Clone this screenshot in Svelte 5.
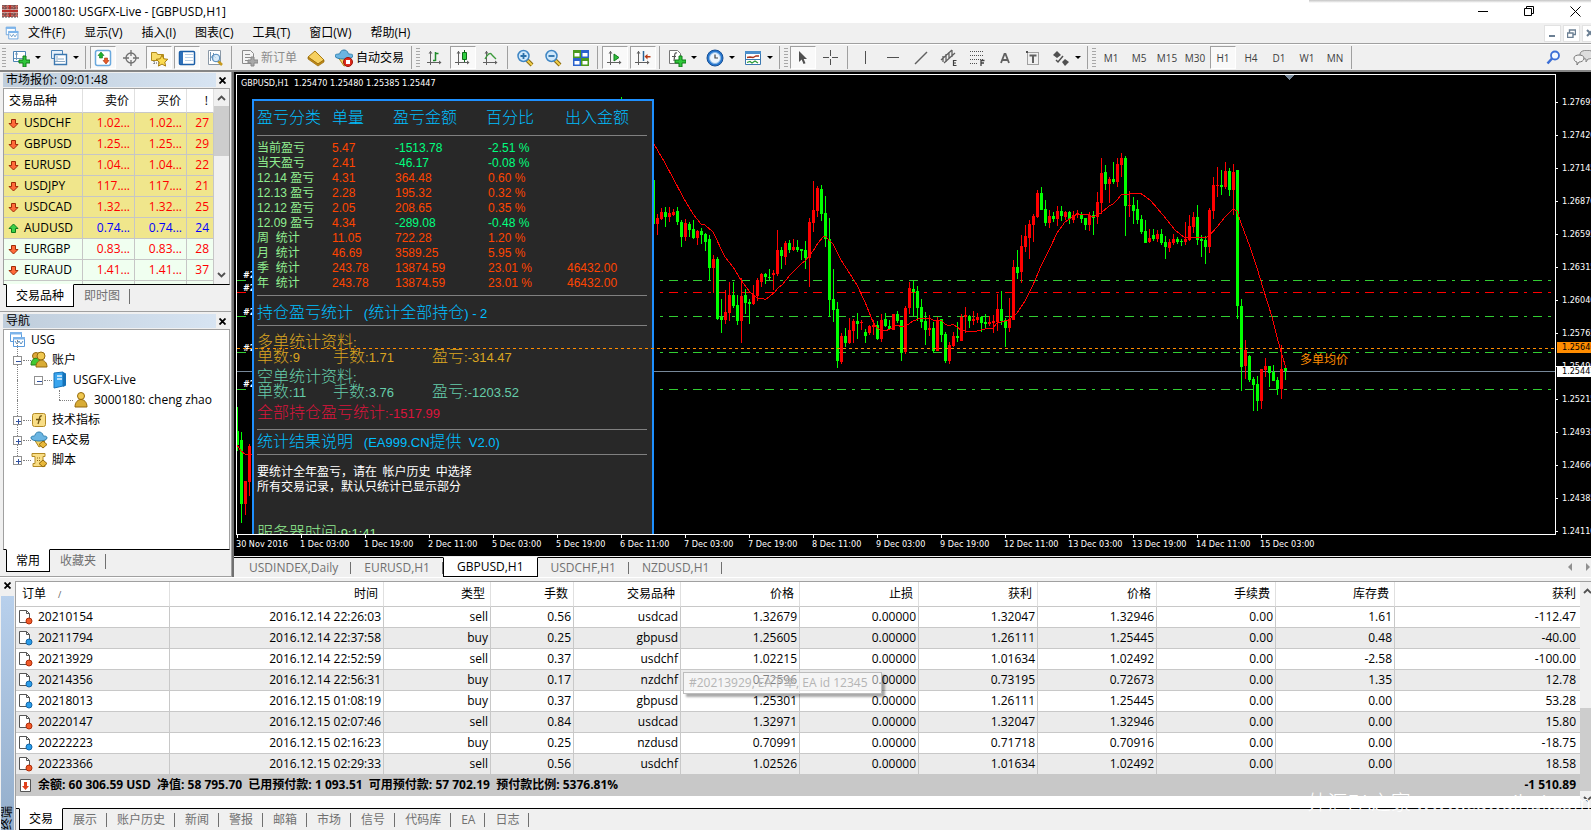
<script>
  const menus = ['文件(F)', '显示(V)', '插入(I)', '图表(C)', '工具(T)', '窗口(W)', '帮助(H)'];

  const axes = '<path d="M4.5 2v14M1 13.5h14" stroke="#606060" fill="none"/><path d="M2.5 4.5l2-2.5 2 2.500zM13 11.500l2.500 2-2.500 2z" fill="#606060"/>';
  const plus = '<path d="M11 7h3v4h4v3h-4v4h-3v-4H7v-3h4z" fill="#2fc63a" stroke="#107a18"/>';
  const lens = '<path d="M11 11l5 5" stroke="#8a6a10" stroke-width="4"/><path d="M11 11l5 5" stroke="#f2cf4a" stroke-width="2"/><circle cx="7.500" cy="7" r="5.500" fill="#cfe8fb" stroke="#3f86c4" stroke-width="1.500"/>';
  const icons = {
    newchart: '<path d="M1.500 2.500h12v10h-12z" fill="#fff" stroke="#4b83b5"/><path d="M4.500 3v8M2 9.500h10M3 5h3" stroke="#6c97bd" fill="none"/>' + plus,
    profiles: '<path d="M1.500 1.500h11v8h-11z" fill="#e6f1fb" stroke="#4b83b5"/><path d="M4.500 5.500h12v10h-12z" fill="#fff" stroke="#3c78b0" stroke-width="1.400"/><path d="M7 7v6M5 12.500h10M8 10h6" stroke="#8aa9c4" fill="none"/>',
    market: '<rect x="1.500" y="1.500" width="15" height="15" rx="2" fill="#fff" stroke="#6aa9de" stroke-width="1.500"/><path d="M7 3l3 3.500H8.500V9h-3V6.500H4z" fill="#20b030" stroke="#0f7a1c" stroke-width=".6"/><path d="M12 15l-3-3.500h1.500V9h3v2.500H15z" fill="#e85a28" stroke="#a8330c" stroke-width=".6"/>',
    target: '<circle cx="9" cy="9" r="5" fill="none" stroke="#707070" stroke-width="1.300"/><path d="M9 1v6M9 11v6M1 9h6M11 9h6" stroke="#707070" stroke-width="1.300"/>',
    navigator: '<path d="M1.500 3.500h5l1 2h6v6h-12z" fill="#f8dc6a" stroke="#b08a1c"/><path d="M4 12v4M4 14h5" stroke="#555" stroke-dasharray="1 1"/><path d="M12 6l1.800 3.800 4 .5-3 2.800.8 4-3.600-2-3.600 2 .8-4-3-2.800 4-.5z" fill="#fbdc50" stroke="#a87c10"/>',
    terminal: '<rect x="1.500" y="2.500" width="15" height="13" rx="1" fill="#fff" stroke="#1c5fa8" stroke-width="1.500"/><path d="M2 3h3v12H2z" fill="#2d6fb8"/><path d="M7 5.500h8M7 8.500h8M7 11.500h8" stroke="#b9cfe6"/>',
    tester: '<path d="M2.500 1.500h12v14h-12z" fill="#fff" stroke="#8a98a6"/><path d="M4.500 3v9M7.500 4v8M4 10l3-4 3 3" stroke="#6f93b5" fill="none"/><path d="M12 12l4 4" stroke="#c79a1e" stroke-width="2.500"/><circle cx="10" cy="9" r="3.800" fill="#cfe6f8cc" stroke="#4c86ba"/>',
    order: '<path d="M2.500 1.500h8l3 3v10h-11z" fill="#f4f4f4" stroke="#8c8c8c"/><path d="M5 5.500h5M5 8.500h6M5 11.500h4" stroke="#8c8c8c"/><path d="M11 8h3v3h4v3h-4v3h-3v-3H8v-3h3z" fill="#a8a8a8" stroke="#888"/>',
    gold: '<path d="M1 8l7-6 9 9-6 4z" fill="#f6d060" stroke="#a87a10"/><path d="M1 8l10 7 6-4v2l-6 4L1 10z" fill="#c58c16" stroke="#94690c" stroke-width=".7"/>',
    ea: '<path d="M3 8l6 9 5-2 2-7z" fill="#f5d263" stroke="#ad8418"/><path d="M0 7c0-3 5-1 5-3 1-4 7-4 8 0 0 2 5 0 5 3 0 4-18 4-18 0z" fill="#6bb5e2" stroke="#2e7fae"/><circle cx="13" cy="13" r="4.500" fill="#de2a1c" stroke="#9c1208"/><path d="M11 11h4v4h-4z" fill="#fff"/>',
    bars: axes + '<path d="M9.500 3v9M9.500 4.500h3M7 11.500h2.500" stroke="#1f8a2a" stroke-width="1.500" fill="none"/>',
    candles: axes + '<path d="M10.500 1v12" stroke="#0f6a1a"/><path d="M8.500 3.500h4v7h-4z" fill="#30d040" stroke="#0f6a1a"/>',
    line: axes + '<path d="M3 10C7 3 9 4 10 6l4 4" stroke="#3a9a3a" stroke-width="1.300" fill="none"/>',
    zoomin: lens + '<path d="M7.500 4v6M4.500 7h6" stroke="#2a6fa8" stroke-width="1.800"/>',
    zoomout: lens + '<path d="M4.500 7h6" stroke="#2a6fa8" stroke-width="1.800"/>',
    tile: '<path d="M1 1h8v8H1zM9 9h8v8H9z" fill="#4a9a1e"/><path d="M9 1h8v8H9zM1 9h8v8H1z" fill="#2a62cc"/><path d="M2.500 4h5v3.500h-5zM10.500 4h5v3.500h-5zM2.500 12h5v3.500h-5zM10.500 12h5v3.500h-5z" fill="#fff"/>',
    scroll: axes + '<path d="M8 5l5 3.500L8 12z" fill="#2cc03a" stroke="#16781f"/>',
    shift: axes + '<path d="M9.500 2v10" stroke="#2a6496" stroke-width="1.500"/><path d="M10.500 7.500l3-2.500v2h3v1.500h-3v2z" fill="#b83a14"/>',
    indicator: '<path d="M1.500 1.500h8l3 3v10h-11z" fill="#fff" stroke="#777"/><path d="M9 4c-3-1-2 2-3 8M4 7.500h4" stroke="#555" fill="none" stroke-width="1.200"/>' + plus,
    clock: '<circle cx="9" cy="9" r="8" fill="#2878d0" stroke="#174f94"/><circle cx="9" cy="9" r="5.500" fill="#eef6fd" stroke="#8dbbe6"/><path d="M9 5.500V9h3" stroke="#444" fill="none" stroke-width="1.200"/>',
    template: '<path d="M1.500 2.500h15v13h-15z" fill="#fff" stroke="#3c78b0"/><path d="M1 2h16v3H1z" fill="#4a8ecb"/><path d="M2 10.500h14" stroke="#3c78b0"/><path d="M3 8.500l3-.5 3 .5 3-1.500h3" stroke="#a8331c" fill="none" stroke-width="1.300"/><path d="M3 13.500l3-1 2 1.500 3-2 3 2" stroke="#2a9a38" fill="none" stroke-width="1.300"/>',
    cursor: '<path d="M5 2v11l2.700-2.500L9.500 15l2-.8-1.800-4.200H13z" fill="#505050"/>',
    cross: '<path d="M8.500 1v6M8.500 10v6M1 8.500h6M10 8.500h6" stroke="#505050"/>',
    vline: '<path d="M9.500 2v13" stroke="#505050"/>',
    hline: '<path d="M3 8.500h12" stroke="#505050"/>',
    trend: '<path d="M3 15L15 3" stroke="#606060" stroke-width="1.400"/>',
    equi: '<path d="M1 11L12 1M4 14L15 4M3 7v6M6 5v8M9 3v7M12 1v7" stroke="#606060" stroke-width="1.300"/><path d="M16.500 11.500h-3v5h3M13.500 14h2.500" stroke="#404040" fill="none" stroke-width="1.200"/>',
    fibo: '<path d="M2 2.500h13M2 6.500h13M2 10.500h13M2 14.500h8" stroke="#505050" stroke-dasharray="1 1"/><path d="M13 17v-5.500h3.500M13 14h3" stroke="#404040" fill="none" stroke-width="1.300"/>',
    text: '<path d="M5 14l3.500-9h1L13 14M6.500 11h5" stroke="#606060" fill="none" stroke-width="1.800"/>',
    label: '<path d="M3.500 3.500h11v12h-11z" stroke="#505050" fill="none" stroke-dasharray="1 1"/><path d="M5.500 6.500h7M9 6v8" stroke="#606060" stroke-width="2"/><path d="M2 2h2v2H2z" fill="#505050"/>',
    shapes: '<path d="M1 6l4-4 4 4-4 3zM10 13l3-3 4 3-4 4z" fill="#505050"/><path d="M4 11l2 2 5-6" stroke="#505050" fill="none" stroke-width="1.500"/>',
    charts: '<path d="M1.500 1.500h11v9h-11z" fill="#fff" stroke="#5b9bdc"/><path d="M1 1h12v2.500H1z" fill="#7db4ea"/><path d="M4.500 6.500h11v9h-11z" fill="#fff" stroke="#5b9bdc"/><path d="M4 6h12v2.500H4z" fill="#7db4ea"/><path d="M6 10l2 3 2-3 2 3 2-3" stroke="#5b8fc0" fill="none"/>',
    people: '<circle cx="6" cy="5" r="3.500" fill="#dfa83a" stroke="#94690c"/><path d="M1 14c0-9 10-9 10 0z" fill="#42c832" stroke="#1f8216"/><circle cx="11" cy="5" r="4" fill="#f0c850" stroke="#94690c"/><path d="M6 16c0-9 11-9 11 0z" fill="#d9ac35" stroke="#94690c"/>',
    server: '<path d="M3 2l9-1v14l-9 2z" fill="#38a4ee" stroke="#1672b8"/><path d="M12 1l3 1.500v12L12 16z" fill="#1672b8"/><path d="M6 5h5M6 8h5" stroke="#e4f5ff" stroke-width="1.300"/>',
    person: '<circle cx="9" cy="5" r="3.500" fill="#f0c850" stroke="#94690c"/><path d="M3 16c0-10 12-10 12 0z" fill="#d9ac35" stroke="#94690c"/>',
    func: '<rect x="2.500" y="2.500" width="13" height="13" rx="2" fill="#f9de86" stroke="#b38a24"/><path d="M12 5c-3-1-2 3-4 8M6 8.500h5" stroke="#6c5210" fill="none" stroke-width="1.300"/>',
    expert: '<path d="M4 8l5 8 5-3 1-5z" fill="#f5d263" stroke="#ad8418"/><path d="M1 7c0-3 4-1 4-3 1-4 7-4 8 0 0 2 4 0 4 3 0 4-16 4-16 0z" fill="#6bb5e2" stroke="#2e7fae"/><path d="M13 10l4 3.500-4 3.500-4-3.500z" fill="#e8b83a" stroke="#94690c"/>',
    script: '<path d="M2 2.500h13v3h-2v7h2v3H3v-3h2v-7H2z" fill="#f9de86" stroke="#b38a24"/><path d="M7 7h4M7 9.500h4" stroke="#94690c" stroke-dasharray="1 1"/><path d="M13 9l4 3.500-4 3.500-4-3.500z" fill="#e8b83a" stroke="#94690c"/>'
  };

  const tools = [
    { k: 'grip' },
    { i: 'newchart', n: '新图表', d: true }, { i: 'profiles', n: '配置文件', d: true }, { k: 'sep' },
    { i: 'market', n: '市场报价', on: true }, { i: 'target', n: '数据窗口' }, { i: 'navigator', n: '导航', on: true },
    { i: 'terminal', n: '终端', on: true }, { i: 'tester', n: '策略测试' }, { k: 'sep' },
    { i: 'order', t: '新订单', off: true }, { i: 'gold', n: '编辑器' }, { i: 'ea', t: '自动交易' }, { k: 'sep' }, { k: 'grip' },
    { i: 'bars', n: '柱状图' }, { i: 'candles', n: '阴阳烛', on: true }, { i: 'line', n: '折线图' }, { k: 'sep' },
    { i: 'zoomin', n: '放大' }, { i: 'zoomout', n: '缩小' }, { i: 'tile', n: '平铺' }, { k: 'sep' },
    { i: 'scroll', n: '自动滚动', on: true }, { i: 'shift', n: '图表平移', on: true }, { k: 'sep' },
    { i: 'indicator', n: '指标', d: true }, { i: 'clock', n: '时间周期', d: true }, { i: 'template', n: '模板', d: true },
    { k: 'sep' }, { k: 'grip' },
    { i: 'cursor', n: '光标', on: true }, { i: 'cross', n: '十字', }, { k: 'sep' },
    { i: 'vline', n: '垂直线' }, { i: 'hline', n: '水平线' }, { i: 'trend', n: '趋势线' }, { i: 'equi', n: '等距通道' },
    { i: 'fibo', n: '斐波纳契' }, { i: 'text', n: '文字' }, { i: 'label', n: '标签' }, { i: 'shapes', n: '箭头', d: true },
    { k: 'sep' }, { k: 'grip' },
    ...['M1', 'M5', 'M15', 'M30', 'H1', 'H4', 'D1', 'W1', 'MN'].map((p) => ({ p, on: p === 'H1' })), { k: 'sep' }
  ];

  const quotes = [
    ['USDCHF', '1.02...', 27], ['GBPUSD', '1.25...', 29], ['EURUSD', '1.04...', 22], ['USDJPY', '117....', 21],
    ['USDCAD', '1.32...', 25], ['AUDUSD', '0.74...', 24], ['EURGBP', '0.83...', 28], ['EURAUD', '1.41...', 37]
  ];

  const tree = [
    { l: 0, i: 'charts', t: 'USG' }, { l: 1, i: 'people', t: '账户', e: '−' }, { l: 2, i: 'server', t: 'USGFX-Live', e: '−' },
    { l: 3, i: 'person', t: '3000180: cheng zhao' }, { l: 1, i: 'func', t: '技术指标', e: '+' },
    { l: 1, i: 'expert', t: 'EA交易', e: '+' }, { l: 1, i: 'script', t: '脚本', e: '+' }
  ];

  // Candle: direction, high, body top, body bottom, low, in thirds of a pixel below y = 130
  const raw = `g150 150 282 282,r252 264 282 315,r234 246 267 270,g231 246 261 291,r231 249 261 276,r237 246 255 258,g231 243 276 285,g270 276 321 351,r267 279 321 333,g276 282 300 321,g270 297 324 327,r300 303 324 345,g294 303 315 342,g309 312 336 363,g315 327 414 450,r375 387 414 489,g381 387 567 570,g507 560 570 609,r480 546 570 582,r456 495 549 573,g456 495 528 534,g495 525 573 585,r444 498 573 639,g477 495 519 552,g507 516 522 582,r465 495 522 525,r444 450 498 513,r429 432 456 471,g429 432 441 462,g417 441 444 450,r420 429 435 480,r300 360 432 438,g351 360 378 417,r333 339 381 405,g330 339 360 369,r327 351 360 363,g330 351 360 366,g357 357 363 390,g333 360 384 417,r264 276 384 471,r153 240 279 306,r168 174 243 261,g165 177 252 273,g198 249 327 351,g264 327 510 560,g417 507 540 576,g516 537 693 714,r609 618 696 702,g594 618 639 651,r564 600 639 642,r567 573 603 639,g549 573 582 627,r570 576 579 600,g597 606 618 639,r585 588 609 615,r570 585 591 615,g573 585 627 630,r552 570 627 636,g549 567 588 591,g570 588 597 600,r552 552 600 600,g543 552 573 579,g570 570 669 693,r528 534 666 672,r456 474 534 552,g453 477 486 558,g468 483 534 573,g507 531 576 594,g546 573 600 645,r555 594 600 618,g576 594 663 669,r561 570 663 663,g567 567 615 636,g606 612 693 699,r636 645 693 702,r606 618 648 651,g576 618 624 636,r552 561 633 633,r531 555 561 609,g555 558 573 594,r543 567 573 585,r549 561 570 579,g558 561 579 606,g552 576 582 594,r558 576 582 588,r555 573 579 609,r492 537 576 603,g483 537 573 585,g564 570 594 651,r504 567 594 606,r390 411 570 570,g360 411 429 447,r315 348 426 459,r285 318 351 366,r270 282 324 387,r252 258 285 336,r180 189 261 264,g171 189 240 240,g210 237 279 288,r240 258 279 294,g246 258 267 276,r228 243 267 288,g228 243 258 273,r243 246 261 270,g243 246 267 282,r243 255 270 279,r240 249 255 264,g246 252 267 279,g264 264 285 300,r246 255 285 303,g243 255 264 315,r186 216 261 282,r84 129 219 252,g105 126 162 180,r141 147 162 219,g96 147 156 162,r84 102 156 171,r69 84 105 141,g78 84 228 318,r183 225 228 261,g201 225 243 282,g210 237 270 282,g255 267 306 312,g270 303 339 339,r297 324 336 339,g297 315 327 333,r300 312 327 336,g297 312 339 345,g318 336 351 387,r327 336 354 366,r312 327 339 345,g321 327 336 342,g327 333 336 348,r276 327 336 345,r255 288 330 333,r246 261 291 309,g225 261 330 345,g315 327 333 381,g318 330 351 402,r234 240 351 369,r141 165 243 267,r111 165 168 201,g120 165 171 195,r96 123 171 177,g114 123 180 198,r102 126 180 255,g120 120 528 567,g507 528 711 783,r630 660 708 747,g675 678 750 756,g741 747 765 843,g738 762 813 843,r717 717 813 837,r684 708 720 741,g708 708 729 771,g705 726 753 753,g741 750 777 795,r645 717 777 807,g711 714 723 750`;
  const make = (s, x) => {
    const [h, t, b, l] = s.slice(1).split(' ').map((n) => Math.round(Number(n) / 3) + 130);
    return { x, c: s[0] === 'g' ? '#00ff00' : '#ff0000', h, t, b: Math.max(b, t + 1), l };
  };
  const candles = raw.split(',').map((s, i) => make(s, 653 + 4 * i));
  ['g831 903 945 963', 'g906 930 1122 1179', 'r1053 1053 1122 1155', 'r942 948 1056 1098'].forEach((s, i) => candles.push(make(s, 237 + 4 * i)));

  const avg = [[12,42],[45,100],[70,143],[100,200],[128,252],[154,282],[166,286],[190,306],[226,380],[250,412],[274,450],[298,482],[322,504],[338,505],[346,511],[360,498],[372,488],[384,474],[396,465],[420,434],[456,399],[466,392],[490,363],[504,340],[518,322],[526,319],[538,330],[550,343],[574,390],[600,432],[622,465],[646,515],[670,575],[682,594],[694,599],[706,604],[720,598],[742,586],[756,592],[778,582],[790,573],[814,565],[826,567],[838,565],[850,571],[874,571],[886,581],[898,589],[910,583],[922,590],[934,600],[958,607],[982,604],[1006,596],[1030,593],[1042,578],[1078,570],[1101,548],[1126,512],[1150,466],[1174,408],[1200,355],[1220,310],[1246,276],[1262,263],[1280,253],[1310,253],[1330,261],[1354,249],[1378,229],[1390,223],[1402,211],[1414,196],[1438,192],[1450,190],[1469,190],[1489,200],[1504,212],[1540,256],[1575,301],[1606,324],[1636,322],[1666,324],[1678,319],[1702,292],[1726,262],[1750,238],[1762,244],[1774,280],[1799,350],[1822,415],[1840,475],[1865,560],[1880,622],[1895,675],[1907,715]]
    .map(([x, y]) => `${Math.round(650 + x / 3)},${Math.round(130 + y / 3)}`).join(' ');

  const levels = [[280, '#32cd32'], [292, '#ff0000'], [316, '#32cd32'], [352, '#32cd32'], [389, '#32cd32']];
  const tags = [278, 291, 315, 351, 387];
  const prices = ['1.27695', '1.27420', '1.27145', '1.26870', '1.26595', '1.26315', '1.26040', '1.25765', '1.25490', '1.25215', '1.24935', '1.24660', '1.24385', '1.24110'];
  const times = ['30 Nov 2016', '1 Dec 03:00', '1 Dec 19:00', '2 Dec 11:00', '5 Dec 03:00', '5 Dec 19:00', '6 Dec 11:00', '7 Dec 03:00', '7 Dec 19:00', '8 Dec 11:00', '9 Dec 03:00', '9 Dec 19:00', '12 Dec 11:00', '13 Dec 03:00', '13 Dec 19:00', '14 Dec 11:00', '15 Dec 03:00'];

  const stats = [
    ['当前盈亏', '5.47', '-1513.78', '-2.51 %', ''], ['当天盈亏', '2.41', '-46.17', '-0.08 %', ''],
    ['12.14 盈亏', '4.31', '364.48', '0.60 %', ''], ['12.13 盈亏', '2.28', '195.32', '0.32 %', ''],
    ['12.12 盈亏', '2.05', '208.65', '0.35 %', ''], ['12.09 盈亏', '4.34', '-289.08', '-0.48 %', ''],
    ['周  统计', '11.05', '722.28', '1.20 %', ''], ['月  统计', '46.69', '3589.25', '5.95 %', ''],
    ['季  统计', '243.78', '13874.59', '23.01 %', '46432.00'], ['年  统计', '243.78', '13874.59', '23.01 %', '46432.00']
  ];

  const heads = ['时间', '类型', '手数', '交易品种', '价格', '止损', '获利', '价格', '手续费', '库存费', '获利'];
  const orders = [
    ['20210154', '2016.12.14 22:26:03', 'sell', '0.56', 'usdcad', '1.32679', '0.00000', '1.32047', '1.32946', '0.00', '1.61', '-112.47'],
    ['20211794', '2016.12.14 22:37:58', 'buy', '0.25', 'gbpusd', '1.25605', '0.00000', '1.26111', '1.25445', '0.00', '0.48', '-40.00'],
    ['20213929', '2016.12.14 22:52:59', 'sell', '0.37', 'usdchf', '1.02215', '0.00000', '1.01634', '1.02492', '0.00', '-2.58', '-100.00'],
    ['20214356', '2016.12.14 22:56:31', 'buy', '0.17', 'nzdchf', '0.72596', '0.00000', '0.73195', '0.72673', '0.00', '1.35', '12.78'],
    ['20218013', '2016.12.15 01:08:19', 'buy', '0.37', 'gbpusd', '1.25301', '0.00000', '1.26111', '1.25445', '0.00', '0.00', '53.28'],
    ['20220147', '2016.12.15 02:07:46', 'sell', '0.84', 'usdcad', '1.32971', '0.00000', '1.32047', '1.32946', '0.00', '0.00', '15.80'],
    ['20222223', '2016.12.15 02:16:23', 'buy', '0.25', 'nzdusd', '0.70991', '0.00000', '0.71718', '0.70916', '0.00', '0.00', '-18.75'],
    ['20223366', '2016.12.15 02:29:33', 'sell', '0.56', 'usdchf', '1.02526', '0.00000', '1.01634', '1.02492', '0.00', '0.00', '18.58']
  ];
  const termTabs = ['交易', '展示', '账户历史', '新闻', '警报', '邮箱', '市场', '信号', '代码库', 'EA', '日志'];
  const chartTabs = ['USDINDEX,Daily', 'EURUSD,H1', 'GBPUSD,H1', 'USDCHF,H1', 'NZDUSD,H1'];
</script>

{#snippet icon(name)}
  <svg class="ico" width="18" height="18" viewBox="0 0 18 18" aria-hidden="true">{@html icons[name]}</svg>
{/snippet}

{#snippet closer()}
  <button class="shut" aria-label="关闭"><svg width="7" height="7" viewBox="0 0 7 7"><path d="M.5.5l6 6M6.500.5l-6 6" stroke="#000" stroke-width="1.800" /></svg></button>
{/snippet}

{#snippet chev(up)}
  <svg class="chev" width="9" height="6" viewBox="0 0 9 6"><path d={up ? 'M1 5l3.500-3.500L8 5' : 'M1 1l3.500 3.500L8 1'} fill="none" stroke="#505050" stroke-width="1.800" /></svg>
{/snippet}

{#snippet tabs(list, active)}
  <nav class="tabs">
    {#each list as t}<button class:active={t === active}>{t}</button>{/each}
  </nav>
{/snippet}

<div class="app">
  <header class="title">
    <svg width="16" height="13" viewBox="0 0 16 13"><path d="M0 0h16v12H0z" fill="#c96a60" /><path d="M0 0h16M0 3h16M0 9h16M0 12h16M3 0v12M12 0v12" stroke="#4a4a50" stroke-dasharray="2 1" /><path d="M7 0h2v12H7zM0 5h16v2H0z" fill="#b8302a" /><path d="M0 4.500h16M0 7.500h16" stroke="#ddd" stroke-width=".5" /></svg>
    <h1>3000180: USGFX-Live - [GBPUSD,H1]</h1>
    <div class="win">
      <button aria-label="最小化"><svg width="11" height="11"><path d="M0 5.500h10" stroke="#000" /></svg></button>
      <button aria-label="还原"><svg width="11" height="11"><path d="M.5 2.500h7v7h-7zM2.500 2.500v-2h7v7h-2" fill="none" stroke="#000" /></svg></button>
      <button aria-label="关闭窗口"><svg width="11" height="11"><path d="M.5.5l10 10M10.500.5l-10 10" stroke="#000" /></svg></button>
    </div>
    <i class="shade"></i>
  </header>

  <div class="menu">
    {@render icon('charts')}
    {#each menus as m}<button>{m}</button>{/each}
    <div class="mdi">
      <button aria-label="最小化图表"><svg width="9" height="9"><path d="M1 7h6" stroke="#6b7f93" stroke-width="2" /></svg></button>
      <button aria-label="还原图表"><svg width="9" height="9"><path d="M.5 4h5.500v4.500H.5zM2.500 4V1h6v4.500H6" fill="none" stroke="#6b7f93" stroke-width="1.400" /></svg></button>
      <button aria-label="关闭图表"><svg width="9" height="9"><path d="M1 1l6 6M7 1L1 7" stroke="#6b7f93" stroke-width="2" /></svg></button>
    </div>
  </div>

  <div class="toolbar">
    {#each tools as t}
      {#if t.k}
        <i class={t.k}></i>
      {:else if t.p}
        <button class="tool period" class:on={t.on}>{t.p}</button>
      {:else}
        <button class="tool" class:on={t.on} class:drop={t.d} class:wide={t.t} disabled={t.off} aria-label={t.t ?? t.n}>
          {@render icon(t.i)}{#if t.t}<span>{t.t}</span>{/if}{#if t.d}<i class="caret"></i>{/if}
        </button>
      {/if}
    {/each}
    <div class="right">
      <button aria-label="搜索"><svg width="15" height="15" viewBox="0 0 15 15"><circle cx="9" cy="5.500" r="4" fill="#f4f9ff" stroke="#3c6fd6" stroke-width="1.800" /><path d="M6 8.500l-4.500 5" stroke="#3c6fd6" stroke-width="2.600" /></svg></button>
      <button aria-label="聊天"><svg width="18" height="15" viewBox="0 0 18 15"><path d="M7 4c0-5 14-5 14 0 0 4-4 5-6 5l-2 3v-3c-3 0-6-2-6-5z" fill="#ddd" stroke="#888" /><path d="M1 8c0-4 10-4 10 0 0 3-3 4-5 4l-2 3v-3c-2 0-3-2-3-4z" fill="#f4f4f4" stroke="#777" /></svg></button>
    </div>
  </div>

  <main>
    <aside>
      <section class="pane watch">
        <div class="cap"><h2>市场报价: 09:01:48</h2>{@render closer()}</div>
        <div class="well">
          <div class="clip">
            <table>
              <thead><tr><th>交易品种</th><th>卖价</th><th>买价</th><th>!</th></tr></thead>
              <tbody>
                {#each quotes as [s, p, n], i}
                  <tr class:up={s === 'AUDUSD'} class:mint={i > 5}>
                    <td><svg width="11" height="11" viewBox="0 0 11 11"><path d={s === 'AUDUSD' ? 'M5.500 1l4.500 4.500H7.500v4h-4v-4H1z' : 'M5.500 10L10 5.500H7.500v-4h-4v4H1z'} fill={s === 'AUDUSD' ? '#3cd048' : '#ff6a3a'} stroke={s === 'AUDUSD' ? '#0e7a1c' : '#a02c08'} /></svg>{s}</td>
                    <td>{p}</td><td>{p}</td><td>{n}</td>
                  </tr>
                {/each}
                <tr class="mint"><td></td><td></td><td></td><td></td></tr>
              </tbody>
            </table>
          </div>
          <div class="bar">{@render chev(true)}<i class="thumb"></i>{@render chev(false)}</div>
        </div>
        {@render tabs(['交易品种', '即时图'], '交易品种')}
      </section>
      <section class="pane navi">
        <div class="cap"><h2>导航</h2>{@render closer()}</div>
        <div class="well">
          <ul>
            {#each tree as n}
              <li class="l{n.l}">
                {#if n.e}<button class="exp" aria-label="展开"><svg width="9" height="9"><path d={n.e === '+' ? 'M2 4.500h5M4.500 2v5' : 'M2 4.500h5'} stroke="#3050a0" /></svg></button>{/if}
                {#if n.l}<i class="twig"></i>{/if}
                {@render icon(n.i)}<span>{n.t}</span>
              </li>
            {/each}
          </ul>
        </div>
        {@render tabs(['常用', '收藏夹'], '常用')}
      </section>
    </aside>

    <section class="work">
      <div class="chart">
        <div class="plot">
          <svg class="canvas" width="100%" height="100%">
            {#each levels as [y, c]}
              <line x1="0" x2="100%" y1={y - 74.5} y2={y - 74.5} stroke={c} stroke-dasharray="9 6 3 6" />
            {/each}
            <line x1="0" x2="100%" y1="296.500" y2="296.500" stroke="#778899" />
            <g transform="translate(-237 -75)" shape-rendering="crispEdges">
              {#each candles as k}
                <rect x={k.x} y={k.h} width="1" height={k.l - k.h} fill={k.c} />
                <rect x={k.x - 1} y={k.t} width="3" height={k.b - k.t} fill={k.c} />
              {/each}
              <rect x="621" y="97" width="1" height="3" fill="#00ff00" />
              <polyline points={avg} fill="none" stroke="#ff0000" />
              <polyline points="237,445 241,451 245,454 252,454" fill="none" stroke="#ff0000" />
              <path d="M1285 75h9l-4.500 5z" fill="#778899" />
              {#each tags as y}<text x="243" y={y} class="tag">#2</text>{/each}
            </g>
            <text x="1063" y="289" class="mean">多单均价</text>
          </svg>
          <p class="quote">GBPUSD,H1&nbsp; 1.25470 1.25480 1.25385 1.25447</p>

          <div class="report">
            <table>
              <thead><tr><th>盈亏分类</th><th>单量</th><th>盈亏金额</th><th>百分比</th><th>出入金额</th></tr></thead>
              <tbody>
                {#each stats as r}
                  <tr class:loss={r[2][0] === '-'}>{#each r as v}<td>{v}</td>{/each}</tr>
                {/each}
              </tbody>
            </table>
            <h3>持仓盈亏统计<b>&nbsp;&nbsp; (</b>统计全部持仓<b>) - 2</b></h3>
            <div class="block long">
              <p>多单统计资料<b>:</b></p>
              <p class="cols"><span>单数<b>:9</b></span><span>手数<b>:1.71</b></span><span>盈亏<b>:-314.47</b></span></p>
            </div>
            <div class="block short">
              <p>空单统计资料<b>:</b></p>
              <p class="cols"><span>单数<b>:11</b></span><span>手数<b>:3.76</b></span><span>盈亏<b>:-1203.52</b></span></p>
            </div>
            <p class="total">全部持仓盈亏统计<b>:-1517.99</b></p>
            <h3 class="second">统计结果说明<b>&nbsp;&nbsp; (EA999.CN</b>提供<b>&nbsp; V2.0)</b></h3>
            <p class="note">要统计全年盈亏，请在&nbsp; 帐户历史&nbsp; 中选择<br />所有交易记录，默认只统计已显示部分</p>
            <p class="clock">服务器时间<b>:9:1:41</b></p>
          </div>
          <svg class="over" width="100%" height="1"><line x1="0" x2="100%" y1=".5" y2=".5" stroke="#ff8c00" stroke-dasharray="3 3" /></svg>
        </div>
        <div class="prices">
          {#each prices as p}<span>{p}</span>{/each}
          <mark class="avg">1.25640</mark>
          <mark class="bid">1.25447</mark>
        </div>
        <div class="times">{#each times as t}<span>{t}</span>{/each}</div>
      </div>
      <div class="charttabs">
        {@render tabs(chartTabs, 'GBPUSD,H1')}
        <div class="arrows"><button aria-label="向左"><svg width="5" height="8"><path d="M5 0v8L1 4z" fill="#909090" /></svg></button><button aria-label="向右"><svg width="5" height="8"><path d="M0 0v8l4-4z" fill="#909090" /></svg></button></div>
      </div>
    </section>
  </main>

  <section class="terminal">
    <div class="spine">{@render closer()}<div><span>终端</span></div></div>
    <div class="desk">
      <div class="sheet">
        <table>
          <colgroup>
            <col class="c1" /><col class="c2" /><col class="c3" /><col class="c4" /><col class="c3" />
            <col class="c5" /><col class="c5" /><col class="c5" /><col class="c5" /><col class="c5" /><col class="c5" /><col />
          </colgroup>
          <thead><tr><th>订单<i>/</i></th>{#each heads as h}<th>{h}</th>{/each}</tr></thead>
          <tbody>
            {#each orders as o}
              <tr>
                {#each o as v, c}
                  <td>{#if c === 0}<svg width="15" height="16" viewBox="0 0 15 16"><path d="M1.500 1.500h7l3 3v9h-10z" fill="#fff" stroke="#555" /><path d="M8.500 1.500v3h3" fill="none" stroke="#555" /><circle cx="11" cy="12" r="3" fill={o[2] === 'sell' ? '#f05a28' : '#2a9ce8'} stroke={o[2] === 'sell' ? '#b02c08' : '#1466a8'} /></svg>{/if}{v}</td>
                {/each}
              </tr>
            {/each}
          </tbody>
          <tfoot>
            <tr>
              <td colspan="11"><svg width="15" height="15" viewBox="0 0 15 15"><path d="M2.500 1.500h10v12h-10z" fill="#fff" stroke="#555" /><path d="M7.500 12l3.500-4H9V4H6v4H4z" fill="#e0401c" /></svg>余额: 60 306.59 USD&nbsp; 净值: 58 795.70&nbsp; 已用预付款: 1 093.51&nbsp; 可用预付款: 57 702.19&nbsp; 预付款比例: 5376.81%</td>
              <td>-1 510.89</td>
            </tr>
          </tfoot>
        </table>
        <div class="bar">{@render chev(true)}<i class="thumb"></i>{@render chev(false)}</div>
        <div class="tip">#20213929, EA下单, EA id 12345</div>
      </div>
      {@render tabs(termTabs, '交易')}
      <span class="brand">外汇EA之家 www.eawaihui.com</span>
    </div>
  </section>
</div>

<style>
  :global(body) { margin: 0; overflow: hidden; }
  h1, h2, h3, p, ul { margin: 0; padding: 0; font-weight: inherit; font-size: inherit; }
  button { font: inherit; color: inherit; background: none; border: 0; padding: 0; margin: 0; white-space: nowrap; }
  table { border-collapse: separate; border-spacing: 0; table-layout: fixed; width: 100%; }
  svg { display: block; flex: none; }
  i { font-style: normal; }
  .app { height: 100vh; display: flex; flex-direction: column; background: #f0f0f0; color: #000; font: 12px/16px 'Open Sans', 'Noto Sans CJK SC', sans-serif; overflow: hidden; }

  .title { height: 23px; background: #fff; display: flex; align-items: center; gap: 6px; padding-left: 2px; position: relative; flex: none; }
  .win { margin-left: auto; display: flex; gap: 35px; padding-right: 10px; }
  .shade { position: absolute; top: 0; right: 0; width: 282px; height: 3px; background: linear-gradient(#c4c4c4, #fff); }

  .menu { height: 20px; display: flex; align-items: center; gap: 19px; padding-left: 5px; border-bottom: 1px solid #a0a0a0; flex: none; }
  .menu :global(.ico) { width: 15px; height: 15px; margin-right: -11px; }
  .mdi { margin-left: auto; display: flex; gap: 2px; margin-right: -8px; }
  .mdi button { width: 17px; height: 17px; background: #fff; border: 1px solid #e2e2e2; display: grid; place-items: center; }

  .toolbar { height: 25px; border-top: 1px solid #fff; border-bottom: 2px solid #868686; display: flex; align-items: center; gap: 2px; padding-left: 2px; flex: none; }
  .tool { width: 26px; height: 23px; display: flex; align-items: center; justify-content: center; border: 1px solid transparent; box-sizing: border-box; flex: none; }
  .tool.on { background: #f9f9f9; border-color: #a0a0a0 #fff #fff #a0a0a0; }
  .drop { width: 36px; justify-content: space-between; padding: 0 2px 0 3px; }
  .wide { width: auto; gap: 3px; padding: 0 3px; }
  .tool:disabled { color: #8c8c8c; }
  .period { font-size: 10px; color: #404040; }
  .caret { border: 3px solid transparent; border-top-color: #000; border-bottom: 0; width: 0; }
  .sep { width: 1px; height: 23px; margin: 0 2px 0 1px; background: #a0a0a0; flex: none; }
  .grip { width: 4px; height: 19px; background: repeating-linear-gradient(#a8a8a8 0 1px, #f0f0f0 1px 3px); flex: none; }
  .right { margin-left: auto; display: flex; align-items: center; gap: 12px; }

  main { flex: 1; min-height: 0; display: flex; }
  aside { width: 232px; display: flex; flex-direction: column; flex: none; border-right: 1px solid #a0a0a0; box-sizing: border-box; }
  .pane { display: flex; flex-direction: column; padding: 1px 1px 4px 3px; border-bottom: 1px solid #a0a0a0; }
  .watch { height: 234px; }
  .navi { flex: 1; min-height: 0; padding-top: 2px; }
  .cap { height: 14px; display: flex; align-items: center; justify-content: space-between; padding-right: 4px; }
  .cap h2 { width: 210px; line-height: 14px; padding-left: 3px; background: linear-gradient(90deg, #bfcddb, #d7e4f2); }
  .well { flex: 1; min-height: 0; display: flex; overflow: hidden; background: #fff; border: 1px solid #a0a0a0; border-bottom: 1px solid #000; margin-top: 1px; }
  .clip { flex: 1; min-width: 0; overflow: hidden; }
  .watch th { height: 23px; padding: 0 5px; font-weight: 400; text-align: right; border: 0 solid #e0e0e0; border-width: 0 1px 0 0; border-bottom: 1px solid #c8c8c8; }
  .watch th:first-child { text-align: left; width: 68px; }
  .watch th:last-child { width: 16px; }
  .watch td { height: 20px; padding: 0 4px; text-align: right; color: #f00; background: #f0e68c; border: 0 solid #c6c6c6; border-width: 0 1px 1px 0; line-height: 16px; }
  .watch td:first-child { text-align: left; color: #000; }
  .watch td svg { display: inline-block; vertical-align: -2px; margin-right: 5px; }
  .watch .mint td { background: #f0fff0; }
  .watch .up td + td { color: #00f; }
  .bar { width: 15px; background: #f0f0f0; display: flex; flex-direction: column; align-items: center; padding: 6px 0; box-sizing: border-box; flex: none; }
  .bar .thumb { width: 100%; height: 50px; margin: 5px 0 auto; background: #cdcdcd; }

  ul { list-style: none; width: 100%; }
  li { height: 20px; display: flex; align-items: center; position: relative; }
  .l0 { padding-left: 5px; }
  .l1 { padding-left: 9px; }
  .l2 { padding-left: 30px; }
  .l3 { padding-left: 54px; }
  li span { margin-left: 4px; }
  .exp { width: 9px; height: 9px; border: 1px solid #919191; background: #fff; display: grid; place-items: center; flex: none; box-sizing: border-box; z-index: 1; }
  .twig { width: 8px; border-top: 1px dotted #808080; margin: 0 -1px 0 1px; }
  .l3 .twig { width: 14px; }
  .l1::before { content: ''; position: absolute; left: 13px; top: -10px; height: 20px; border-left: 1px dotted #808080; }
  .l2::before, .l3::before { content: ''; position: absolute; left: 13px; top: -10px; height: 100%; padding-bottom: 20px; border-left: 1px dotted #808080; }
  .l3::after { content: ''; position: absolute; left: 55px; top: 0; height: 10px; border-left: 1px dotted #808080; }

  .tabs { display: flex; height: 22px; padding-left: 3px; color: #707070; flex: none; }
  .tabs button { padding: 0 10px; position: relative; flex: none; }
  .tabs button:not(.active)::after { content: ''; position: absolute; right: 0; top: 4px; bottom: 3px; width: 1px; background: #707070; }
  .tabs .active { background: #fff; color: #000; border: 1px solid #000; border-top-color: #fff; margin-top: -1px; padding: 0 9px; }

  .work { flex: 1; min-width: 0; display: flex; flex-direction: column; border-left: 2px solid #707070; }
  .chart { flex: 1; min-height: 0; background: #000; color: #fff; display: grid; grid-template: minmax(0, 1fr) 21px / minmax(0, 1fr) 35px; padding: 2px 0 0 2px; font: 9px/12px 'DejaVu Sans Condensed', 'DejaVu Sans', sans-serif; }
  .plot { border: 1px solid #fff; position: relative; overflow: hidden; min-height: 0; }
  .canvas { position: absolute; inset: 0; }
  .tag { fill: #fff; font-weight: 700; }
  .mean { fill: #ff8c00; font: 12px 'Noto Sans CJK SC', sans-serif; }
  .quote { position: relative; padding: 2px 4px; white-space: nowrap; }
  .report { position: absolute; left: 15px; top: 24px; bottom: -20px; width: 402px; box-sizing: border-box; border: 2px solid #1e90ff; background: #282828; padding: 0 5px 0 3px; font: 300 16px/16px 'Noto Sans CJK SC', sans-serif; overflow: hidden; }
  .report b { font: 13px/15px 'Liberation Sans', sans-serif; white-space: pre; }
  .report th { height: 35px; padding: 0 0 4px; box-sizing: border-box; text-align: left; font-weight: 300; color: #00bfff; border-bottom: 1px solid #808080; white-space: nowrap; }
  .report th:nth-child(1) { width: 75px; }
  .report th:nth-child(2) { width: 61px; }
  .report th:nth-child(3) { width: 93px; }
  .report th:nth-child(4) { width: 79px; }
  .report tbody::before { content: ''; display: block; height: 5px; }
  .report td { padding: 0; height: 15px; font: 12px/15px 'Liberation Sans', 'Noto Sans CJK SC', sans-serif; color: #ff4500; white-space: pre; }
  .report td:first-child { color: #90ee90; }
  .report td:nth-child(n + 3) { padding-left: 2px; }
  .report .loss td:nth-child(n + 3) { color: #00ff7f; }
  .report h3 { color: #00bfff; border: solid #808080; border-width: 1px 0; height: 29px; line-height: 30px; margin-top: 4px; white-space: nowrap; }
  .report h3.second { height: 24px; line-height: 21px; margin-top: 8px; }
  .block { line-height: 15px; height: 30px; margin-top: 5px; }
  .block p { height: 15px; }
  .long { color: #daa520; margin-top: 7px; }
  .short { color: #66cdaa; }
  .cols { display: grid; grid-template-columns: 76px 99px 1fr; }
  .total { color: #dc143c; margin-top: 5px; }
  .note { color: #fff; font: 12px/15px 'Noto Sans CJK SC', sans-serif; margin-top: 8px; }
  .clock { color: #90ee90; margin-top: 30px; }
  .over { position: absolute; left: 0; top: 273px; }

  .prices { position: relative; display: flex; flex-direction: column; padding-top: 12px; overflow: hidden; }
  .prices span { height: 33px; line-height: 33px; display: flex; align-items: center; gap: 4px; flex: none; }
  .prices span::before { content: ''; width: 2px; height: 1px; background: #fff; flex: none; }
  .prices mark { position: absolute; left: 1px; right: 0; padding-left: 5px; height: 11px; line-height: 11px; }
  .avg { top: 268px; background: #ff8c00; }
  .bid { top: 292px; background: #fff; }
  .times { grid-column: 1 / -1; display: flex; overflow: hidden; }
  .times span { width: 64px; flex: none; white-space: nowrap; position: relative; padding-top: 3px; }
  .times span::before { content: ''; position: absolute; left: 1px; top: 0; width: 1px; height: 3px; background: #fff; }

  .charttabs { height: 19px; border-top: 1px solid #000; margin-top: 1px; display: flex; justify-content: space-between; align-items: flex-start; }
  .charttabs :global(.tabs) { height: 19px; padding-left: 2px; }
  .charttabs :global(.tabs button) { padding: 0 13px; }
  .arrows { display: flex; gap: 14px; padding: 5px 0 0; }

  .terminal { display: flex; border-top: 1px solid #fff; padding-top: 3px; flex: none; }
  .spine { width: 15px; display: flex; flex-direction: column; align-items: center; padding-top: 1px; gap: 7px; flex: none; }
  .spine > div { flex: 1; width: 13px; background: linear-gradient(#b8d0ec, #94aecb); display: flex; align-items: flex-end; overflow: hidden; }
  .spine span { writing-mode: vertical-rl; text-orientation: sideways; transform: rotate(180deg); line-height: 12px; }
  .desk { flex: 1; min-width: 0; position: relative; border-top: 1px solid #a0a0a0; border-left: 1px solid #a0a0a0; }
  .desk > :global(.tabs) { height: 21px; }
  .sheet { background: #fff; border-bottom: 1px solid #000; padding-bottom: 12px; display: flex; position: relative; margin-right: -4px; }
  .sheet .bar { margin-bottom: -12px; }
  .sheet .bar .thumb { height: 83px; margin: auto 0 5px; }
  .c1 { width: 154px; } .c2 { width: 214px; } .c3 { width: 107px; } .c4 { width: 83px; } .c5 { width: 119px; }
  .sheet th { height: 24px; padding: 0 5px; font-weight: 400; text-align: right; border: 0 solid #e0e0e0; border-right-width: 1px; border-bottom: 1px solid #c8c8c8; }
  .sheet th i { margin-left: 12px; font-size: 9px; color: #606060; }
  .sheet td { height: 20px; padding: 0 2px; text-align: right; border: 0 solid #c8c8c8; border-width: 0 1px 1px 0; white-space: nowrap; }
  .sheet :is(th, td):first-child { text-align: left; }
  .sheet th:first-child { padding-left: 6px; }
  .sheet tbody tr:nth-child(even) td { background: #ebebeb; }
  .sheet :is(th, td):last-child { border-right: 0; padding-right: 4px; }
  .sheet td svg { display: inline-block; vertical-align: -4px; margin-right: 5px; }
  .sheet tfoot td { background: #c8c8c8; font-weight: 700; border-right: 0; }
  .tip { position: absolute; left: 667px; top: 90px; width: 192px; height: 20px; line-height: 20px; padding-left: 5px; color: #b4b4b4; border: 1px solid #bdbdbd; background: #ffffff80; box-shadow: 3px 3px 2px #0005; white-space: nowrap; }
  .brand { position: absolute; right: 0; bottom: 16px; color: #fff; font: 300 20px/24px 'Noto Sans CJK SC', sans-serif; pointer-events: none; }
</style>
